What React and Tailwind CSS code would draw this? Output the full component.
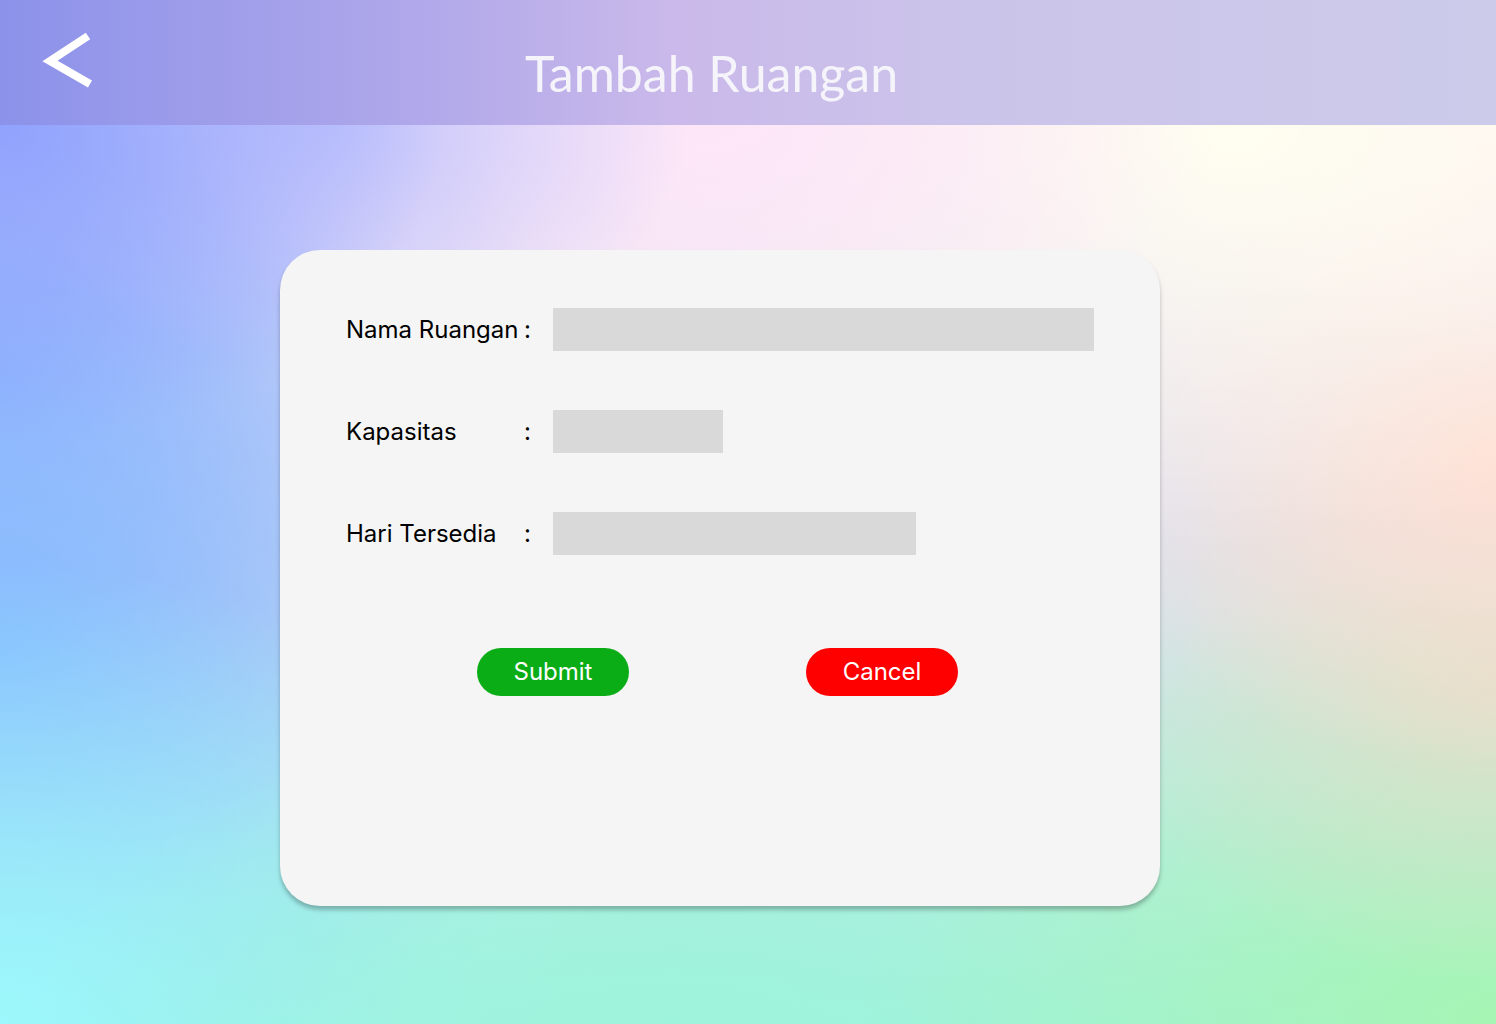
export default function App() {
  const rows = [
    { label: "Nama Ruangan", w: "w-[541px]" },
    { label: "Kapasitas", w: "w-[170px]" },
    { label: "Hari Tersedia", w: "w-[363px]" },
  ];
  return (
    <div
      className="w-[1496px] h-[1024px] overflow-hidden flex flex-col"
      style={{ fontFamily: "Inter, 'Noto Sans', sans-serif" }}
    >
      <header className="h-[125px] shrink-0 flex items-center bg-[linear-gradient(90deg,#8c92ea_0%,#b0a8ea_28%,#cab9ea_45%,#cbc4ea_65%,#cccbea_100%)]">
        <svg width="100" height="125" viewBox="0 0 100 125" className="shrink-0">
          <polyline
            points="88,36 50,61 90,84"
            fill="none"
            stroke="#ffffff"
            strokeWidth="8"
            strokeLinejoin="miter"
          />
        </svg>
        <h1
          className="ml-[425px] text-[50px] leading-none text-[#f6f4fb] mt-[20px]"
          style={{ fontFamily: "Lato, 'Open Sans', sans-serif" }}
        >
          Tambah Ruangan
        </h1>
      </header>
      <main className="flex-1 pt-[125px] pl-[280px] bg-[radial-gradient(440px_320px_at_0%_0%,#8fa2fd,transparent),radial-gradient(360px_240px_at_22%_0%,#c2c4fc,transparent),radial-gradient(520px_300px_at_47%_0%,#fde6f8,transparent),radial-gradient(620px_420px_at_82%_0%,#fffff0,transparent),radial-gradient(320px_260px_at_100%_0%,#fff0f0,transparent),radial-gradient(420px_320px_at_100%_37%,#ffe0d5,transparent),radial-gradient(400px_300px_at_100%_62%,#e0dfc8,transparent),radial-gradient(640px_460px_at_100%_100%,#a7f5b4,transparent),radial-gradient(640px_320px_at_45%_100%,#9ef3dc,transparent),radial-gradient(620px_460px_at_0%_100%,#9cf8fc,transparent),radial-gradient(540px_560px_at_0%_58%,#86bcfe,transparent),radial-gradient(540px_560px_at_0%_28%,#97aefd,transparent),linear-gradient(180deg,#f5e6f5_0%,#dce2ee_50%,#a2f1dc_100%)]">
        <div className="w-[880px] h-[656px] rounded-[40px] bg-[#f5f5f5] shadow-[0_4px_4px_rgba(0,0,0,0.25)] pt-[58px] pl-[66px]">
          <div className="flex flex-col gap-[59px]">
            {rows.map((r) => (
              <div key={r.label} className="flex items-center h-[43px]">
                <div className="w-[207px] pr-[22px] flex justify-between text-[24px] text-black">
                  <span>{r.label}</span>
                  <span>:</span>
                </div>
                <div className={`${r.w} h-[43px] bg-[#d9d9d9]`} />
              </div>
            ))}
          </div>
          <div className="flex gap-[177px] mt-[93px] ml-[131px]">
            <button className="w-[152px] h-[48px] rounded-full bg-[#0bad17] text-white text-[24px]">
              Submit
            </button>
            <button className="w-[152px] h-[48px] rounded-full bg-[#ff0000] text-white text-[24px]">
              Cancel
            </button>
          </div>
        </div>
      </main>
    </div>
  );
}
